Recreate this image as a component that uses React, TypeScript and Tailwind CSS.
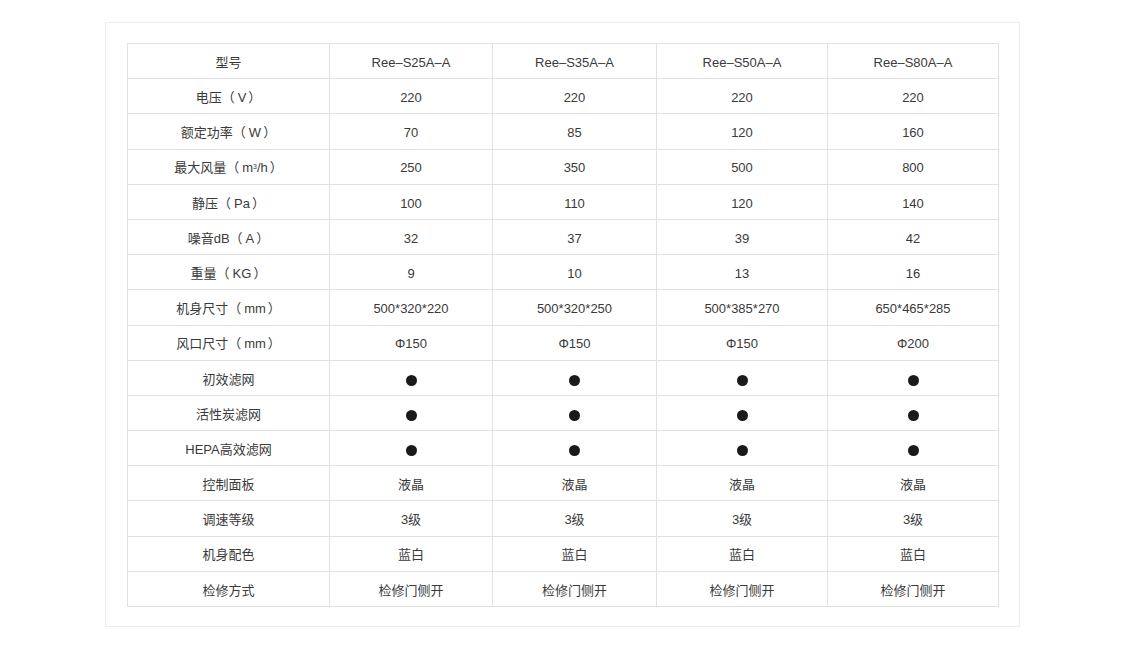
import React from 'react';

const models = ['Ree–S25A–A', 'Ree–S35A–A', 'Ree–S50A–A', 'Ree–S80A–A'];

const DOT = '__dot__';

// label with a unit in full-width brackets, spaced the way the source font sets them
const withUnit = (name: string, unit: React.ReactNode) => (
  <>
    {name}（<span className="pl-[3px] pr-[2px]">{unit}</span>）
  </>
);

const rows: { label: React.ReactNode; values: string[] }[] = [
  { label: withUnit('电压', 'V'), values: ['220', '220', '220', '220'] },
  { label: withUnit('额定功率', 'W'), values: ['70', '85', '120', '160'] },
  {
    label: withUnit(
      '最大风量',
      <>
        m<sup className="text-[7px]">3</sup>/h
      </>
    ),
    values: ['250', '350', '500', '800'],
  },
  { label: withUnit('静压', 'Pa'), values: ['100', '110', '120', '140'] },
  { label: withUnit('噪音dB', 'A'), values: ['32', '37', '39', '42'] },
  { label: withUnit('重量', 'KG'), values: ['9', '10', '13', '16'] },
  { label: withUnit('机身尺寸', 'mm'), values: ['500*320*220', '500*320*250', '500*385*270', '650*465*285'] },
  { label: withUnit('风口尺寸', 'mm'), values: ['Φ150', 'Φ150', 'Φ150', 'Φ200'] },
  { label: '初效滤网', values: [DOT, DOT, DOT, DOT] },
  { label: '活性炭滤网', values: [DOT, DOT, DOT, DOT] },
  { label: 'HEPA高效滤网', values: [DOT, DOT, DOT, DOT] },
  { label: '控制面板', values: ['液晶', '液晶', '液晶', '液晶'] },
  { label: '调速等级', values: ['3级', '3级', '3级', '3级'] },
  { label: '机身配色', values: ['蓝白', '蓝白', '蓝白', '蓝白'] },
  { label: '检修方式', values: ['检修门侧开', '检修门侧开', '检修门侧开', '检修门侧开'] },
];

const colWidths = ['w-[202px]', 'w-[163px]', 'w-[164px]', 'w-[171px]', 'w-[171px]'];

const Cell: React.FC<{ children: React.ReactNode; col: number }> = ({ children, col }) => (
  <td className={`${colWidths[col]} h-[35.2px] border border-[#e2e2e2] text-center align-middle p-0 pt-[3px]`}>
    {children}
  </td>
);

const App: React.FC = () => {
  return (
    <div
      className="w-[1125px] h-[649px] bg-white pt-[22px] text-[13px] text-[#3a3a3a]"
      style={{ fontFamily: '"Liberation Sans", "Noto Sans CJK SC", sans-serif' }}
    >
      <div className="mx-auto w-[915px] h-[605px] border border-[#ececec] px-[21px] pt-[20px]">
        <table className="border-collapse table-fixed w-[872px]">
          <tbody>
            <tr>
              <Cell col={0}>型号</Cell>
              {models.map((m, i) => (
                <Cell key={m} col={i + 1}>
                  {m}
                </Cell>
              ))}
            </tr>
            {rows.map((row, r) => (
              <tr key={r}>
                <Cell col={0}>{row.label}</Cell>
                {row.values.map((v, i) => (
                  <Cell key={i} col={i + 1}>
                    {v === DOT ? (
                      <span className="inline-block w-[11px] h-[11px] rounded-full bg-[#1a1a1a] align-middle" />
                    ) : (
                      v
                    )}
                  </Cell>
                ))}
              </tr>
            ))}
          </tbody>
        </table>
      </div>
    </div>
  );
};

export default App;
